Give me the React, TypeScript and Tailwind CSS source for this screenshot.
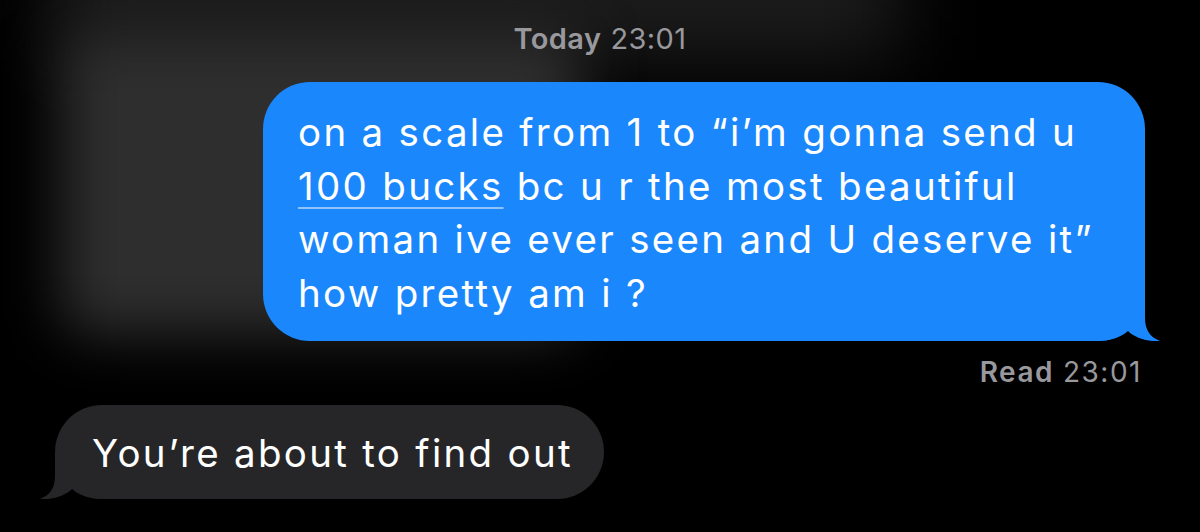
import React from "react";

function Tail({ color, flip }: { color: string; flip?: boolean }) {
  return (
    <svg
      width="65"
      height="47"
      viewBox="0 0 65 47"
      className={
        flip
          ? "absolute left-[-15px] bottom-0 -scale-x-100"
          : "absolute right-[-15px] bottom-0"
      }
    >
      <path
        d="M0,0 H50 V24 C50,36 55,43 65,47 C55,48 41,45 33,37 C25,44 14,47 0,47 Z"
        fill={color}
      />
    </svg>
  );
}

export default function App() {
  return (
    <div className="relative w-[1200px] h-[532px] bg-black overflow-hidden font-['Inter','Noto_Sans',sans-serif]">
      {/* blurred background glow */}
      <div className="absolute left-[50px] top-[-80px] w-[850px] h-[140px] bg-[#1c1c1c] blur-[40px]" />
      <div className="absolute left-[60px] top-[30px] w-[520px] h-[305px] rounded-[30px] bg-[#2e2e2e] blur-[28px]" />

      <div className="relative flex flex-col">
        <div className="pt-[24px] mb-[29px] flex justify-center text-[29px] leading-[29px] tracking-[0.4px] text-[#98989d]">
          <span className="font-semibold">Today</span>
          <span className="ml-[9px]">23:01</span>
        </div>

        <div className="flex justify-end pr-[55px]">
          <div className="relative w-[882px] rounded-[47px] bg-[#1b87fd] pl-[35px] pt-[24px] pb-[21px] text-[38.5px] leading-[53.5px] tracking-[2.3px] text-white">
            <p className="relative z-10">
              on a scale from 1 to “i’m gonna send u
              <br />
              <span className="underline decoration-[#8fc2f7] decoration-2 underline-offset-[7px]">
                100 bucks
              </span>{" "}
              bc u r the most beautiful
              <br />
              woman ive ever seen and U deserve it”
              <br />
              how pretty am i ?
            </p>
            <Tail color="#1b87fd" />
          </div>
        </div>

        <div className="mt-[17px] flex justify-end pr-[58px] text-[28px] leading-[28px] tracking-[1.5px] text-[#98989d]">
          <span className="font-semibold">Read</span>
          <span className="ml-[9px]">23:01</span>
        </div>

        <div className="mt-[19px] pl-[55px]">
          <div className="relative w-[549px] rounded-[47px] bg-[#262628] pl-[37px] pt-[22px] pb-[18px] text-[38.5px] leading-[53.5px] tracking-[2.3px] text-white">
            <p className="relative z-10">You’re about to find out</p>
            <Tail color="#262628" flip />
          </div>
        </div>
      </div>
    </div>
  );
}
